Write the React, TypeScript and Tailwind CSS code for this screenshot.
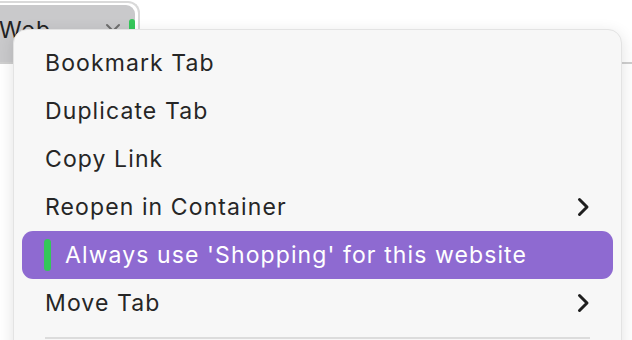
import React from 'react';

type Item = { label: string; submenu?: boolean; active?: boolean };

const items: Item[] = [
    { label: 'Bookmark Tab' },
    { label: 'Duplicate Tab' },
    { label: 'Copy Link' },
    { label: 'Reopen in Container', submenu: true },
    { label: "Always use 'Shopping' for this website", active: true },
    { label: 'Move Tab', submenu: true },
];

const Chevron = () => (
    <svg width="13" height="20" viewBox="0 0 13 20" fill="none" className="text-[#1f1f1f]">
        <polyline points="2.5,2.5 10,10 2.5,17.5" stroke="currentColor" strokeWidth="3" strokeLinecap="round" strokeLinejoin="round" />
    </svg>
);

export default function App() {
    return (
        <div className="relative w-[632px] h-[340px] overflow-hidden bg-white font-['Inter','Liberation_Sans',sans-serif]">
            {/* Tab strip underneath the menu */}
            <div className="h-[63px] border-b-2 border-[#cfcfcf]">
                <div className="ml-[-30px] mt-px w-[170px] h-[61px] rounded-tr-[12px] border-2 border-b-0 border-[#d9d9d9] bg-white pt-[2px] pr-[3px]">
                    <div className="h-full rounded-tr-[9px] bg-[#c9c9cb] flex items-start pt-[14px] pl-[27px]">
                        <span className="text-[23px] leading-none tracking-[1px] text-[#222]">Web</span>
                        <span className="ml-auto mr-[8px] mt-[4px] text-[#6e6e6e]">
                            <svg width="16" height="16" viewBox="0 0 16 16" fill="none">
                                <path d="M2 2 L14 14 M14 2 L2 14" stroke="currentColor" strokeWidth="2" strokeLinecap="round" />
                            </svg>
                        </span>
                        <span className="mt-[0px] w-[6px] h-[14px] rounded-full bg-[#34c759]" />
                    </div>
                </div>
            </div>

            {/* Context menu */}
            <div className="absolute left-[13px] top-[29px] w-[609px] h-[360px] rounded-[14px] border border-[#e3e3e3] bg-[#f7f7f7] shadow-[0_4px_16px_rgba(0,0,0,0.12)] px-[8px] pt-[9px]">
                {items.map((item) => (
                    <div
                        key={item.label}
                        className={
                            item.active
                                ? 'h-[48px] flex items-center pl-[22px] pr-[23px] rounded-[11px] bg-[#8e6ad1] text-white'
                                : 'h-[48px] flex items-center pl-[23px] pr-[23px] text-[#262626]'
                        }
                    >
                        {item.active && <span className="w-[7px] h-[32px] rounded-full bg-[#34c759] mr-[14px]" />}
                        <span className="text-[23px] leading-none tracking-[1.1px]">{item.label}</span>
                        {item.submenu && (
                            <span className="ml-auto">
                                <Chevron />
                            </span>
                        )}
                    </div>
                ))}
                <div className="mx-[23px] mt-[10px] h-[2px] bg-[#dcdcdc]" />
            </div>
        </div>
    );
}
